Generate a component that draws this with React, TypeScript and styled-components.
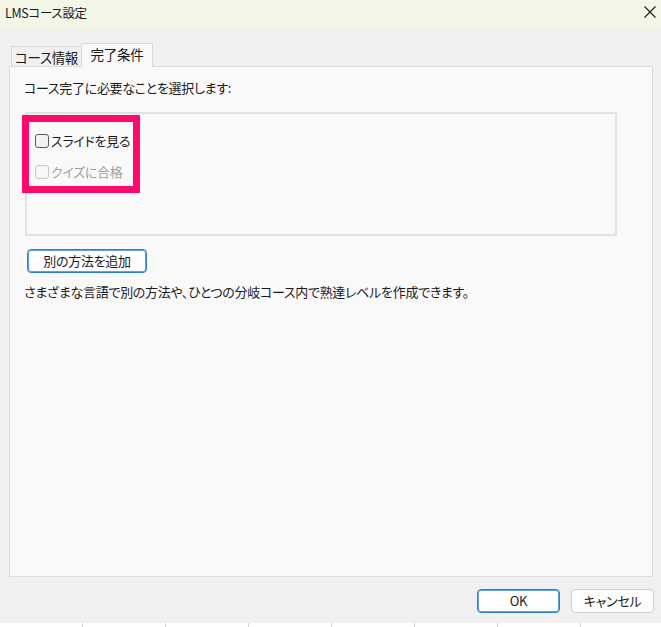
import React from "react";
import styled, { createGlobalStyle } from "styled-components";

const Global = createGlobalStyle`
  html, body { margin: 0; padding: 0; background: #ffffff; }
  body { font-family: "Noto Sans CJK JP", "Noto Sans", sans-serif; }
  * { box-sizing: border-box; }
`;

const FONT = `"Noto Sans CJK JP", "Noto Sans", sans-serif`;

const Window = styled.div`
  width: 661px;
  height: 627px;
  display: flex;
  flex-direction: column;
  background: #f0f0f0;
  font-family: ${FONT};
  font-feature-settings: "palt";
  letter-spacing: -0.3px;
  color: #1b1b1b;
  overflow: hidden;
`;

const TitleBar = styled.div`
  height: 29px;
  flex: none;
  display: flex;
  align-items: center;
  justify-content: space-between;
  padding: 0 4px 0 5px;
  background: #f3f5e7;
`;

const Title = styled.span`
  font-size: 12.5px;
  line-height: 16px;
  margin-top: -4px;
  color: #1a1a1a;
`;

const CloseButton = styled.div`
  width: 12px;
  height: 12px;
  margin-right: 1px;
  margin-top: -6px;
  display: flex;
`;

const Body = styled.div`
  flex: 1;
  display: flex;
  flex-direction: column;
  padding: 14px 8px 0 9px;
`;

const TabRow = styled.div`
  display: flex;
  align-items: flex-end;
  height: 23px;
  padding-left: 2px;
  position: relative;
  z-index: 1;
`;

const Tab = styled.div<{ $active?: boolean }>`
  font-size: 13.5px;
  line-height: 16px;
  display: flex;
  align-items: center;
  justify-content: center;
  border: 1px solid #d9d9d9;
  border-bottom: none;
  background: ${(p) => (p.$active ? "#f9f9f9" : "#f0f0f0")};
  height: ${(p) => (p.$active ? "24px" : "20px")};
  margin-bottom: ${(p) => (p.$active ? "-1px" : "0")};
  width: ${(p) => (p.$active ? "72px" : "71px")};
  margin-left: ${(p) => (p.$active ? "-1px" : "0")};
  padding-bottom: ${(p) => (p.$active ? "3px" : "0")};
  color: #1a1a1a;
`;

const Panel = styled.div`
  height: 511px;
  flex: none;
  border: 1px solid #dcdcdc;
  background: #f9f9f9;
  padding: 13px 35px 0 15px;
  display: flex;
  flex-direction: column;
  align-items: flex-start;
`;

const Label = styled.div`
  font-size: 13px;
  line-height: 16px;
  margin-left: -1px;
`;

const ChoiceBox = styled.div`
  position: relative;
  margin-top: 16px;
  width: 592px;
  height: 124px;
  border: 2px solid #e2e2e2;
  background: #f9f9f9;
  padding: 17px 0 0 8px;
  display: flex;
  flex-direction: column;
  gap: 11px;
`;

const Highlight = styled.div`
  position: absolute;
  left: -5px;
  top: 1px;
  width: 118px;
  height: 78px;
  border: 7px solid #ff0a6c;
  pointer-events: none;
`;

const CheckRow = styled.label<{ $disabled?: boolean }>`
  display: flex;
  align-items: center;
  gap: 2px;
  height: 20px;
  font-size: 13px;
  line-height: 16px;
  color: ${(p) => (p.$disabled ? "#a0a0a0" : "#1a1a1a")};
`;

const CheckBox = styled.span<{ $disabled?: boolean }>`
  width: 14px;
  height: 14px;
  border-radius: 3px;
  border: 1px solid ${(p) => (p.$disabled ? "#c6c6c6" : "#5c5c5c")};
  background: ${(p) => (p.$disabled ? "#f7f7f7" : "#f3f3f3")};
  flex: none;
`;

const PushButton = styled.button<{ $primary?: boolean; $w: number }>`
  width: ${(p) => p.$w}px;
  height: 24px;
  border-radius: 4px;
  background: #fdfdfd;
  border: 1px solid ${(p) => (p.$primary ? "#2f7fd0" : "#d0d0d0")};
  box-shadow: ${(p) => (p.$primary ? "inset 0 0 0 1px #5ea1e4" : "none")};
  font-family: ${FONT};
  font-feature-settings: "palt";
  letter-spacing: -0.3px;
  font-size: 13px;
  line-height: 16px;
  color: #1a1a1a;
  padding: 0;
  display: flex;
  align-items: center;
  justify-content: center;
`;

const AddButtonWrap = styled.div`
  margin-top: 13px;
  margin-left: 2px;
`;

const Description = styled.div`
  margin-top: 11px;
  font-size: 13px;
  line-height: 16px;
  margin-left: -1px;
  white-space: nowrap;
`;

const Footer = styled.div`
  height: 46px;
  flex: none;
  display: flex;
  justify-content: flex-end;
  align-items: flex-start;
  padding-top: 12px;
  margin-right: -1px;
  gap: 11px;
`;

const BottomStrip = styled.div`
  height: 4px;
  flex: none;
  background: #ffffff;
  display: grid;
  grid-template-columns: 82px repeat(6, 83px) 1fr;
`;

const StripCell = styled.div<{ $first?: boolean }>`
  border-left: ${(p) => (p.$first ? "none" : "1px solid #d4d4d4")};
`;

export default function App() {
  return (
    <>
      <Global />
      <Window>
        <TitleBar>
          <Title>LMSコース設定</Title>
          <CloseButton>
            <svg width="12" height="12" viewBox="0 0 12 12">
              <path d="M0.5 0.5 L11.5 11.5 M11.5 0.5 L0.5 11.5" stroke="#1a1a1a" strokeWidth="1.1" fill="none" />
            </svg>
          </CloseButton>
        </TitleBar>
        <Body>
          <TabRow>
            <Tab>コース情報</Tab>
            <Tab $active>完了条件</Tab>
          </TabRow>
          <Panel>
            <Label>コース完了に必要なことを選択します:</Label>
            <ChoiceBox>
              <CheckRow>
                <CheckBox />
                スライドを見る
              </CheckRow>
              <CheckRow $disabled>
                <CheckBox $disabled />
                クイズに合格
              </CheckRow>
              <Highlight />
            </ChoiceBox>
            <AddButtonWrap>
              <PushButton $primary $w={120}>別の方法を追加</PushButton>
            </AddButtonWrap>
            <Description>
              さまざまな言語で別の方法や、ひとつの分岐コース内で熟達レベルを作成できます。
            </Description>
          </Panel>
          <Footer>
            <PushButton $primary $w={83}>OK</PushButton>
            <PushButton $w={83}>キャンセル</PushButton>
          </Footer>
        </Body>
        <BottomStrip>
          {Array.from({ length: 8 }).map((_, i) => (
            <StripCell key={i} $first={i === 0} />
          ))}
        </BottomStrip>
      </Window>
    </>
  );
}
